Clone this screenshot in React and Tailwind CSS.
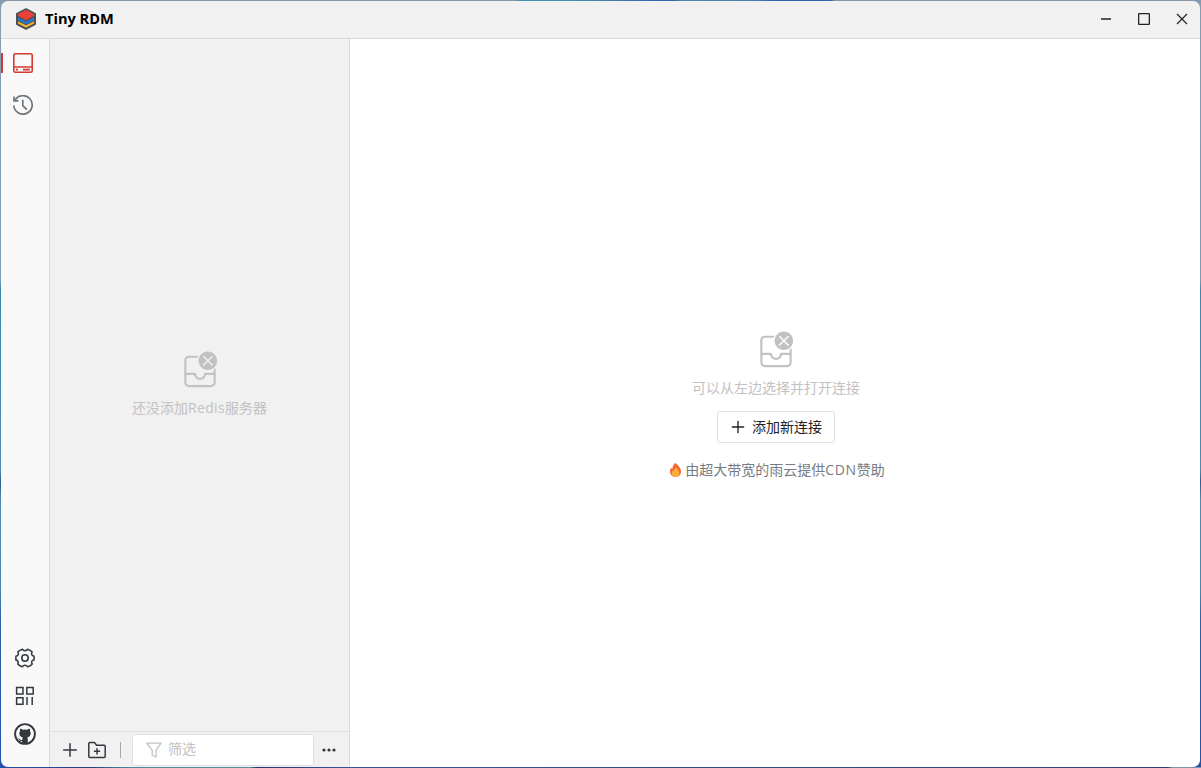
const uiFont = "font-['Open_Sans','Noto_Sans_CJK_SC',sans-serif]"

function Logo() {
    return (
        <svg className="mb-0.5" width="22" height="22" viewBox="0 0 22 22">
            <path d="M11 1.2 20 5.9V16.1L11 20.8 2 16.1V5.9Z" fill="#4a5157" stroke="#4a5157" strokeWidth="2" strokeLinejoin="round" />
            <path d="M3 13.2 11 17.2 19 13.2V15.4L11 19.7 3 15.4Z" fill="#f2b134" />
            <path d="M3 9.6 11 13.8 19 9.6V12L11 16.2 3 12Z" fill="#1f7fd8" />
            <path d="M11 1.8 19 6.1V7.8L11 12.6 3 7.8V6.1Z" fill="#e8403a" />
        </svg>
    )
}

function ServerIcon() {
    return (
        <svg width="22" height="22" viewBox="0 0 22 22" fill="none" stroke="currentColor" strokeWidth="1.6">
            <rect x="1.8" y="1.8" width="18.4" height="18.4" rx="1.5" />
            <path d="M1.8 15H20.2M4 17.6H6M11 17.6H18" />
        </svg>
    )
}

function HistoryIcon() {
    return (
        <svg width="22" height="22" viewBox="0 0 22 22" fill="none" stroke="currentColor" strokeWidth="1.7">
            <path d="M3 5.3A9.2 9.2 0 1 1 1.8 10.5" />
            <path d="M2 1.5V5.9H6.4M10.8 4.7V10.7L14.8 14.7" />
        </svg>
    )
}

function GearIcon() {
    return (
        <svg width="22" height="22" viewBox="0 0 48 48" fill="none" stroke="currentColor" strokeWidth="3.4" strokeLinejoin="round">
            <path d="M18.28 43.17A19.98 19.98 0 0 1 8.21 36.99C9.37 35.63 9.69 33.65 8.95 31.8C8.16 29.85 6.27 28.58 4.27 28.62C4.09 27.12 4 25.5 4.07 23.6C4.1 22.3 4.3 20.7 4.6 19.6C6.69 19.7 8.68 18.4 9.4 16.5C10.1 14.6 9.6 12.6 8.3 11.1A20 20 0 0 1 18.3 4.85C19.5 6.7 21.6 8 24 8C26.4 8 28.5 6.7 29.7 4.85A20 20 0 0 1 39.6 11C38.3 12.5 37.9 14.6 38.6 16.4C39.4 18.4 41.4 19.6 43.5 19.5A20 20 0 0 1 43.5 28.5C41.4 28.4 39.5 29.7 38.8 31.6C38.1 33.4 38.5 35.5 39.8 36.9A20 20 0 0 1 29.7 43.2C28.5 41.2 26.4 40 24 40C21.6 40 19.4 41.2 18.28 43.17Z" />
            <circle cx="24" cy="24" r="7" />
        </svg>
    )
}

function AppsIcon() {
    return (
        <svg width="22" height="22" viewBox="0 0 22 22" fill="none" stroke="currentColor" strokeWidth="1.5">
            <path d="M2.6 2.6H9V9H2.6ZM12.8 2.6H19.2V9H12.8ZM2.6 12.8H9V19.2H2.6ZM13 12V20M18.2 12V20" />
        </svg>
    )
}

function GithubIcon() {
    return (
        <svg width="22" height="22" viewBox="0 0 22 22">
            <circle cx="11" cy="11" r="9.9" fill="none" stroke="currentColor" strokeWidth="1.9" />
            <path
                d="M6.2 5.7C7.1 5.6 8.2 6.2 9 6.8A9 9 0 0 1 13 6.8C13.8 6.2 14.9 5.6 15.8 5.7C16.2 6.7 16.2 7.5 16 8.2C16.6 9 16.8 9.8 16.7 10.8C16.5 13.2 15.2 14.1 13.1 14.5C13.6 15 13.8 15.5 13.8 16.3V20.5H8.2V18.3C6.6 18.6 5.8 17.9 5.2 16.8C4.9 16.3 4.5 16 4 15.6C5.1 15.3 5.8 15.9 6.3 16.6C6.8 17.3 7.4 17.4 8.2 17.1C8.2 15.7 8.4 15 8.9 14.5C6.8 14.1 5.5 13.2 5.3 10.8C5.2 9.8 5.4 9 6 8.2C5.8 7.5 5.8 6.7 6.2 5.7Z"
                fill="currentColor"
            />
        </svg>
    )
}

function PlusIcon({ size }) {
    return (
        <svg width={size} height={size} viewBox="0 0 20 20" fill="none" stroke="currentColor" strokeWidth="1.5" strokeLinecap="round">
            <path d="M10 3.7V16.3M3.7 10H16.3" />
        </svg>
    )
}

function FolderPlusIcon() {
    return (
        <svg width="20" height="20" viewBox="0 0 20 20" fill="none" stroke="currentColor" strokeWidth="1.5" strokeLinejoin="round">
            <path d="M1.8 16.4V3.6Q1.8 2.6 2.8 2.6H7.4L9.6 5.2H17.2Q18.2 5.2 18.2 6.2V16.4Q18.2 17.4 17.2 17.4H2.8Q1.8 17.4 1.8 16.4ZM10 8.2V14.4M6.9 11.3H13.1" />
        </svg>
    )
}

function FilterIcon() {
    return (
        <svg width="18" height="18" viewBox="0 0 18 18" fill="none" stroke="currentColor" strokeWidth="1.3" strokeLinejoin="round">
            <path d="M1.8 2.2H16.2L11 9.2V16L7.2 14V9.2Z" />
        </svg>
    )
}

function EmptyIcon() {
    return (
        <svg width="40" height="40" viewBox="0 0 28 28" fill="currentColor">
            <path d="M26 7.5C26 11.0899 23.0899 14 19.5 14C15.9101 14 13 11.0899 13 7.5C13 3.91015 15.9101 1 19.5 1C23.0899 1 26 3.91015 26 7.5ZM16.8536 4.14645C16.6583 3.95118 16.3417 3.95118 16.1464 4.14645C15.9512 4.34171 15.9512 4.65829 16.1464 4.85355L18.7929 7.5L16.1464 10.1464C15.9512 10.3417 15.9512 10.6583 16.1464 10.8536C16.3417 11.0488 16.6583 11.0488 16.8536 10.8536L19.5 8.20711L22.1464 10.8536C22.3417 11.0488 22.6583 11.0488 22.8536 10.8536C23.0488 10.6583 23.0488 10.3417 22.8536 10.1464L20.2071 7.5L22.8536 4.85355C23.0488 4.65829 23.0488 4.34171 22.8536 4.14645C22.6583 3.95118 22.3417 3.95118 22.1464 4.14645L19.5 6.79289L16.8536 4.14645Z" />
            <path d="M25 22.75V12.5991C24.5572 13.0765 24.053 13.4961 23.5 13.8454V16H17.5L17.3982 16.0068C17.0322 16.0565 16.75 16.3703 16.75 16.75C16.75 18.2688 15.5188 19.5 14 19.5C12.4812 19.5 11.25 18.2688 11.25 16.75L11.2432 16.6482C11.1935 16.2822 10.8797 16 10.5 16H4.5V7.25C4.5 6.2835 5.2835 5.5 6.25 5.5H12.2696C12.4146 4.97463 12.6153 4.47237 12.865 4H6.25C4.45507 4 3 5.45507 3 7.25V22.75C3 24.5449 4.45507 26 6.25 26H21.75C23.5449 26 25 24.5449 25 22.75ZM4.5 22.75V17.5H9.81597L9.85751 17.7041C10.2905 19.5919 11.9808 21 14 21L14.215 20.9947C16.2095 20.8953 17.842 19.4209 18.184 17.5H23.5V22.75C23.5 23.7165 22.7165 24.5 21.75 24.5H6.25C5.2835 24.5 4.5 23.7165 4.5 22.75Z" />
        </svg>
    )
}

function FlameIcon() {
    return (
        <svg width="13" height="16" viewBox="0 0 13 16">
            <path d="M6.4 .8C7.4 2.4 9.6 3.8 10.8 5.8C11.6 7 12 8.2 12 9.6C12 12.8 9.6 15 6.5 15C3.4 15 1 12.8 1 9.6C1 8 1.5 6.8 2.2 5.8C2.5 6.4 2.8 6.8 3.3 7C3.5 4.6 4.6 2.4 6.4 .8Z" fill="#fa6432" />
            <path d="M7 5.2C7.6 6.8 10.4 8.4 10.4 11C10.4 13.4 8.6 14.8 6.5 14.8C4.4 14.8 2.6 13.4 2.6 11.2C2.6 10 3.3 9 3.9 8.3C4.2 8.8 4.6 9 5 9.1C5.1 7.7 5.8 6.2 7 5.2Z" fill="#fcae3b" />
        </svg>
    )
}

function TitleBar() {
    return (
        <div className="flex h-[38px] shrink-0 items-center border-b border-[#d9d9dc] bg-[#f1f1f1] pl-3.5">
            <Logo />
            <span className="ml-2 pb-1 text-[14.6px] leading-5 font-bold text-black">Tiny RDM</span>
            <div className="-mr-px mb-0.5 ml-auto flex text-[#222]">
                <button className="flex h-9 w-[38px] items-center justify-center">
                    <svg width="12" height="12" viewBox="0 0 12 12" stroke="currentColor" strokeWidth="1.4"><path d="M1 6H11" /></svg>
                </button>
                <button className="flex h-9 w-[38px] items-center justify-center">
                    <svg width="12" height="12" viewBox="0 0 12 12" fill="none" stroke="currentColor" strokeWidth="1.3"><rect x=".65" y=".65" width="10.7" height="10.7" rx=".6" /></svg>
                </button>
                <button className="flex h-9 w-[38px] items-center justify-center">
                    <svg width="12" height="12" viewBox="0 0 12 12" stroke="currentColor" strokeWidth="1.2"><path d="M1 1 11 11M11 1 1 11" /></svg>
                </button>
            </div>
        </div>
    )
}

function NavRail() {
    return (
        <div className="flex w-[49px] shrink-0 flex-col border-r border-[#d9d9dc] bg-[#f9f9f9]">
            <div className="flex h-[42px] items-center pt-1.5">
                <span className="h-5 w-0.5 bg-[#d33a31]" />
                <span className="ml-[9px] text-[#d33a31]"><ServerIcon /></span>
            </div>
            <div className="flex h-[42px] items-center pt-[7px] pl-[11px] text-[#70767b]"><HistoryIcon /></div>
            <div className="mt-auto mb-[22px] flex flex-col items-center gap-4 text-[#33393e]">
                <GearIcon />
                <AppsIcon />
                <GithubIcon />
            </div>
        </div>
    )
}

function ConnectionPane() {
    return (
        <div className="flex w-[300px] shrink-0 flex-col border-r border-[#d9d9dc] bg-[#f1f1f1]">
            <div className="flex flex-1 flex-col items-center justify-center gap-2 text-[#c2c2c2]">
                <EmptyIcon />
                <div className="pb-0.5 text-[14px] leading-5">还没添加<span className="tracking-[0.3px]">Redis</span>服务器</div>
            </div>
            <div className="flex h-[36px] shrink-0 items-center border-t border-[#e0e0e6] text-[#33393e]">
                <span className="ml-2.5"><PlusIcon size={20} /></span>
                <span className="ml-[7px]"><FolderPlusIcon /></span>
                <span className="ml-[13px] h-4 w-px bg-[#a8a8ac]" />
                <div className="ml-[11px] flex h-8 w-[182px] items-center rounded-[3px] border border-[#e0e0e6] bg-white pl-3 text-[#c2c2c2]">
                    <FilterIcon />
                    <input placeholder="筛选" className="ml-[5px] w-[130px] pb-0.5 text-[14px] leading-5 outline-none placeholder:text-[#c2c2c2]" />
                </div>
                <svg className="ml-[7px]" width="16" height="16" viewBox="0 0 16 16" fill="currentColor">
                    <circle cx="3" cy="8" r="1.6" />
                    <circle cx="8" cy="8" r="1.6" />
                    <circle cx="13" cy="8" r="1.6" />
                </svg>
            </div>
        </div>
    )
}

function Welcome() {
    return (
        <div className="flex flex-1 flex-col items-center justify-center bg-white pt-[5px] pl-0.5">
            <span className="text-[#c2c2c2]"><EmptyIcon /></span>
            <div className="mt-2 pb-0.5 text-[14px] leading-5 text-[#c2c2c2]">可以从左边选择并打开连接</div>
            <button className="mt-[11px] flex h-8 w-[118px] items-center rounded-[3px] border border-[#e0e0e6] pl-[11px] text-[14px] text-[#222]">
                <PlusIcon size={18} />
                <span className="ml-[5px] leading-5 whitespace-nowrap">添加新连接</span>
            </button>
            <div className="mt-4 flex items-center gap-[3px] pl-0.5 text-[14px] leading-[22px] text-[#767c82]">
                <FlameIcon />
                <span>由超大带宽的雨云提供<span className="tracking-[0.6px]">CDN</span>赞助</span>
            </div>
        </div>
    )
}

// desktop colours showing around the rounded window
const topEdge = 'bg-[linear-gradient(to_right,#8797a8_516px,#4590b0_520px,#4590b0_570px,#3a68ae_650px,#3560ad_674px,#5089b4_682px,#4a7ab4_760px,#3560ad_772px,#3560ad_830px,#8797a8_836px)]'
const bottomEdge = 'bg-[linear-gradient(to_right,#2352ab,#2a3f80_90px,#4a8a9a_130px,#5a9098_250px,#27336e_256px,#35529a_340px,#2d4274_1168px,#7d93a6_1172px)]'
const sideEdges = 'bg-[linear-gradient(to_bottom,#829eb4,#7a9cb4_280px,#3d88b3_290px,#4b8cb0_470px,#2b5c9a_482px,#4c8cb0_500px,#4688b0_590px,#2a62ac_620px,#2352ab)]'

export default function App() {
    return (
        <div className={`flex h-[768px] w-[1201px] flex-col overflow-hidden ${uiFont} ${sideEdges}`}>
            <div className={`h-px shrink-0 ${topEdge}`} />
            <div className="mx-px flex min-h-0 flex-1 flex-col overflow-hidden rounded-[7px]">
                <TitleBar />
                <div className="flex min-h-0 flex-1">
                    <NavRail />
                    <ConnectionPane />
                    <Welcome />
                </div>
            </div>
            <div className={`h-px shrink-0 ${bottomEdge}`} />
        </div>
    )
}
